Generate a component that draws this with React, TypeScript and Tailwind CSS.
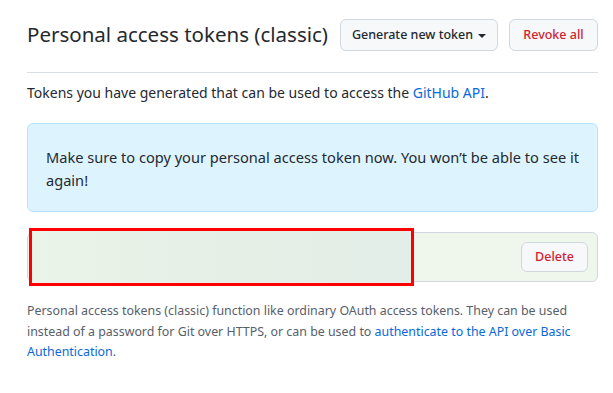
export default function App() {
  return (
    <div
      className="min-h-[393px] w-[613px] bg-white pl-[27px] pr-[15px] text-[#24292f]"
      style={{ fontFamily: '"Noto Sans", "Open Sans", sans-serif' }}
    >
      {/* Header */}
      <div className="flex h-[73px] items-start border-b border-[#d8dee4] pt-[19px]">
        <h1 className="-mt-[1px] flex-1 text-[20.5px] leading-[32px] font-normal whitespace-nowrap">
          Personal access tokens (classic)
        </h1>
        <div className="flex gap-[11px]">
          <button className="flex h-[32px] w-[158px] items-center justify-center gap-[5px] rounded-md border border-[#d0d7de] bg-[#f6f8fa] text-[12.5px] font-medium text-[#24292f]">
            Generate new token
            <span className="mt-[2px] inline-block h-0 w-0 border-x-[4px] border-t-[4px] border-x-transparent border-t-[#24292f]" />
          </button>
          <button className="h-[32px] w-[89px] rounded-md border border-[#d0d7de] bg-[#f6f8fa] text-[12.5px] font-medium text-[#cf222e]">
            Revoke all
          </button>
        </div>
      </div>

      <p className="mt-[9px] text-[14px] leading-[21px]">
        Tokens you have generated that can be used to access the{" "}
        <a className="text-[#0969da]">GitHub API</a>.
      </p>

      {/* Flash */}
      <div className="mt-[20px] rounded-md border border-[#b6e3ff] bg-[#ddf4ff] pl-[18px] pr-[14px] pt-[22px] pb-[19px] text-[14.6px] leading-[23px]">
        Make sure to copy your personal access token now. You won’t be able to see it again!
      </div>

      {/* Token row */}
      <div className="relative mt-[20px] flex h-[50px] items-center justify-end rounded-md border border-[#d0d7de] bg-[#eff7ec] pr-[9px]">
        <div className="absolute left-[1px] top-[-5px] h-[58px] w-[385px] border-[3px] border-[#ff0000] bg-gradient-to-r from-[#ebf4e9] via-[#e6efe5] to-[#e3eee9]" />
        <button className="h-[30px] w-[67px] rounded-md border border-[#d0d7de] bg-[#f6f8fa] text-[12.5px] font-medium text-[#cf222e]">
          Delete
        </button>
      </div>

      <p className="mt-[19px] text-[12.4px] leading-[20.5px] text-[#57606a]">
        Personal access tokens (classic) function like ordinary OAuth access tokens. They can be used instead of a password for Git over HTTPS, or can be used to{" "}
        <a className="text-[#0969da]">authenticate to the API over Basic Authentication</a>.
      </p>
    </div>
  );
}
